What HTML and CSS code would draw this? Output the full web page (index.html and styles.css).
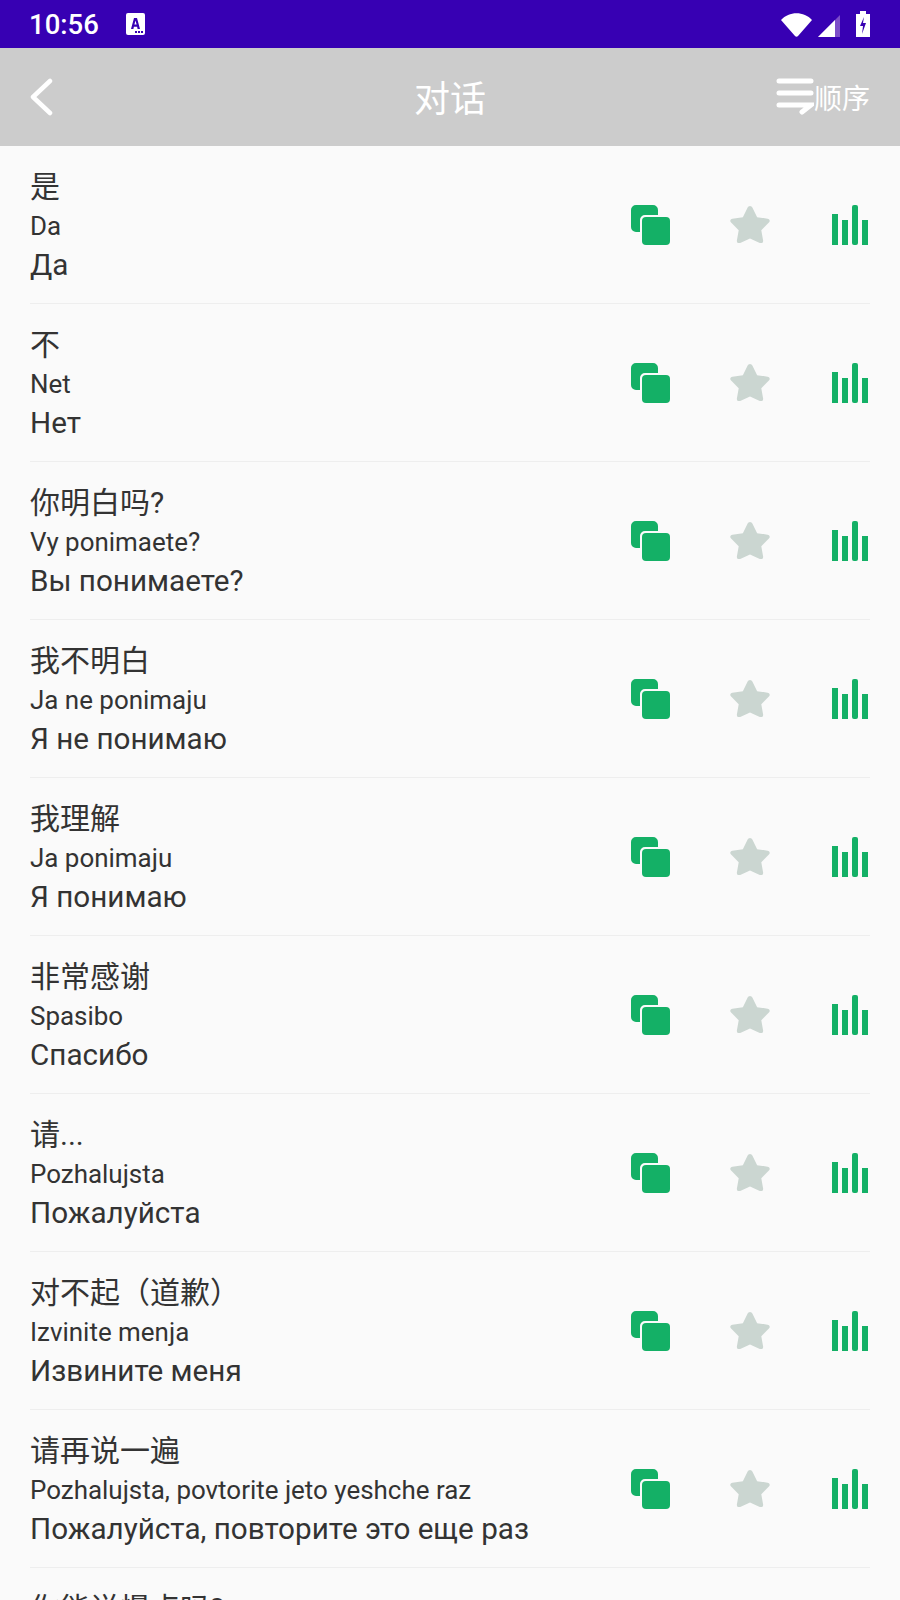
FILE: index.html
```html
<!DOCTYPE html>
<html lang="zh">
<head>
    <meta charset="UTF-8">
    <meta name="viewport" content="width=device-width, initial-scale=1.0">
    <title>对话</title>
    <link rel="stylesheet" href="styles.css">
</head>
<body>
<svg class="defs" width="0" height="0">
    <symbol id="copy" viewBox="0 0 40 40">
        <path d="M6 0h17a5 5 0 0 1 5 5v5H15a5 5 0 0 0-5 5v12H6a5 5 0 0 1-5-5V5a5 5 0 0 1 5-5z"/>
        <rect x="12" y="12" width="28" height="28" rx="4"/>
    </symbol>
    <symbol id="star" viewBox="0 0 42 40">
        <path d="M21 1c1.200 0 2 .8 2.600 2l4.900 9.800 11 1.600c2.300.4 3 2.500 1.400 4.100l-8 8 1.900 10.900c.4 2.300-1.500 3.700-3.500 2.600L21 35.300 10.700 40c-2 1.100-3.900-.3-3.500-2.600L9.100 26.500l-8-8C-.5 16.900.2 14.800 2.500 14.400l11-1.600L18.400 3C19 1.800 19.800 1 21 1z"/>
    </symbol>
    <symbol id="bars" viewBox="0 0 36 40">
        <rect x="0" y="9" width="6" height="31"/>
        <rect x="10" y="15" width="6" height="25"/>
        <rect x="20" y="0" width="6" height="40" rx="2"/>
        <rect x="30" y="15" width="6" height="25"/>
    </symbol>
</svg>

<div class="statusbar">
    <span class="time">10:56</span>
    <svg class="status-a" width="19" height="22" viewBox="0 0 19 22">
        <rect width="19" height="22" rx="2" fill="#fff"/>
        <path d="M5 16 8 5h3l3 11h-2.400l-.5-2.200H7.900L7.400 16zM8.400 11.600h2.200L9.500 7.500z" fill="#3700b3"/>
        <rect x="9" y="18" width="2" height="2" fill="#3700b3"/>
        <rect x="12" y="18" width="2" height="2" fill="#3700b3"/>
        <rect x="15" y="18" width="2" height="2" fill="#3700b3"/>
    </svg>
    <span class="status-right">
        <svg width="31" height="24" viewBox="0 0 31 24"><path d="M0 7C8-2 23-2 31 7L17 23c-.8.900-2.200.900-3 0z" fill="#fff"/></svg>
        <svg class="signal" width="22" height="24" viewBox="0 0 22 24">
            <path d="M0 24 22 2v22z" fill="#7c4dc9"/>
            <path d="M0 24 17 7v17z" fill="#fff"/>
        </svg>
        <svg class="battery" width="14" height="26" viewBox="0 0 14 26">
            <path d="M4 0h6v3h4v23H0V3h4z" fill="#fff"/>
            <path d="M8 6 4 15h3l-1 8 4-11H7z" fill="#3700b3"/>
        </svg>
    </span>
</div>

<div class="toolbar">
    <svg class="back" width="24" height="40" viewBox="0 0 24 40"><path d="M20 4 3 20l17 16" fill="none" stroke="#fff" stroke-width="4.500" stroke-linecap="round" stroke-linejoin="round"/></svg>
    <div class="title">对话</div>
    <div class="order">
        <svg width="38" height="38" viewBox="0 0 38 38">
            <g fill="none" stroke="#fff" stroke-width="5" stroke-linecap="round">
                <path d="M3 3h32M3 15h32M3 27h32l-9 7"/>
            </g>
        </svg>
        <span>顺序</span>
    </div>
</div>

<div class="list" id="list"></div>

<script>
    const phrases = [
        ['是', 'Da', 'Да'],
        ['不', 'Net', 'Нет'],
        ['你明白吗?', 'Vy ponimaete?', 'Вы понимаете?'],
        ['我不明白', 'Ja ne ponimaju', 'Я не понимаю'],
        ['我理解', 'Ja ponimaju', 'Я понимаю'],
        ['非常感谢', 'Spasibo', 'Спасибо'],
        ['请...', 'Pozhalujsta', 'Пожалуйста'],
        ['对不起（道歉）', 'Izvinite menja', 'Извините меня'],
        ['请再说一遍', 'Pozhalujsta, povtorite jeto yeshche raz', 'Пожалуйста, повторите это еще раз'],
        ['你能说慢点吗?', 'Vy mozhete govorit medlennee?', 'Вы можете говорить медленнее?']
    ];

    let html = '';
    for (const [zh, latin, ru] of phrases) {
        html += `<div class="row">
            <div class="texts">
                <div class="zh">${zh}</div>
                <div class="latin">${latin}</div>
                <div class="ru">${ru}</div>
            </div>
            <svg class="icon icon-copy"><use href="#copy"/></svg>
            <svg class="icon icon-star"><use href="#star"/></svg>
            <svg class="icon icon-bars"><use href="#bars"/></svg>
        </div>`;
    }
    document.getElementById('list').innerHTML = html;
</script>
</body>
</html>
```

FILE: styles.css
```css
html, body {
    margin: 0;
    padding: 0;
    height: 1600px;
    overflow: hidden;
}

body {
    font-family: Roboto, "Noto Sans CJK SC", sans-serif;
    background-color: #fafafa;
    color: #333;
}

.defs {
    display: none;
}

.statusbar {
    height: 48px;
    background-color: #3700b3;
    display: flex;
    align-items: center;
    padding: 0 30px 0 29px;
    color: #fff;
}

.time {
    font-size: 27.500px;
    font-weight: 500;
}

.status-a {
    margin-left: 27px;
    margin-bottom: 1px;
}

.status-right {
    margin-left: auto;
    display: flex;
    align-items: flex-end;
    margin-top: -2px;
    padding-top: 1px;
}

.signal {
    margin-left: 6px;
}

.battery {
    margin-left: 16px;
}

.toolbar {
    height: 98px;
    background-color: #ccc;
    display: flex;
    align-items: center;
    padding: 0 30px;
    position: relative;
    color: #fff;
}

.back {
    display: block;
}

.title {
    position: absolute;
    left: 0;
    right: 0;
    margin-top: -2px;
    text-align: center;
    font-size: 36px;
}

.order {
    margin-left: auto;
    display: flex;
    align-items: center;
    font-size: 28px;
}

.list {
    padding: 0 30px;
}

.row {
    height: 157px;
    border-bottom: 1.500px solid #eee;
    display: flex;
    align-items: center;
}

.texts {
    flex: 1;
    padding-top: 2px;
}

.zh {
    font-size: 30px;
    line-height: 40px;
}

.latin {
    font-size: 25.950px;
    line-height: 38px;
}

.ru {
    font-size: 29.650px;
    line-height: 40px;
}

.icon {
    display: block;
    height: 40px;
}

.icon-copy {
    width: 40px;
    fill: #14b066;
}

.icon-star {
    width: 40px;
    height: 38px;
    margin-left: 60px;
    margin-bottom: 2px;
    fill: #cbd6d1;
}

.icon-bars {
    width: 36px;
    margin-left: 62px;
    margin-right: 2px;
    fill: #14b066;
}
```
